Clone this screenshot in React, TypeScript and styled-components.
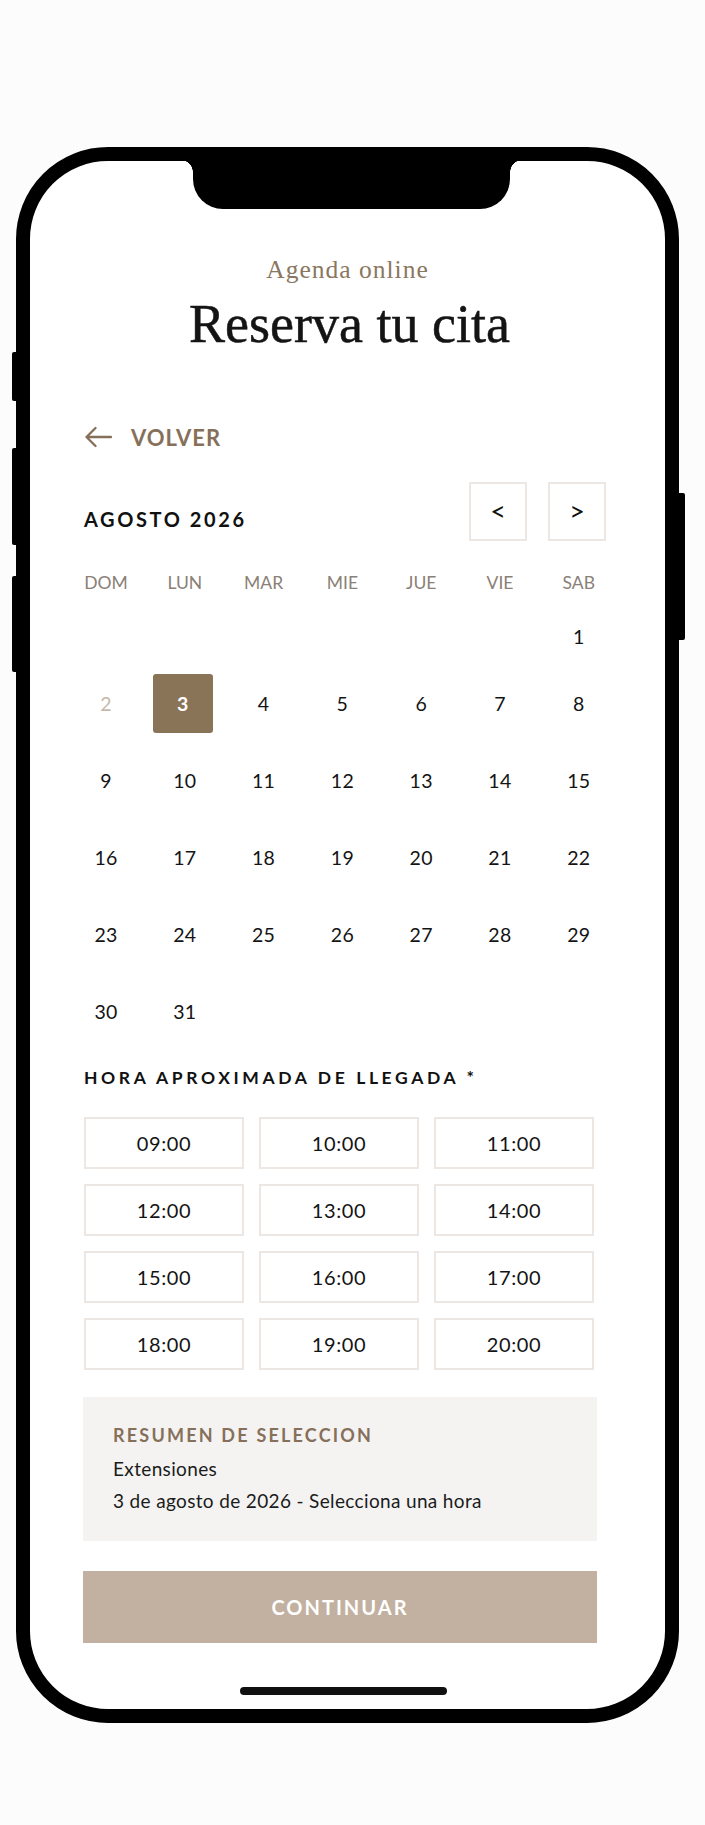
import { FC } from "react";
import styled, { createGlobalStyle, css } from "styled-components";

const GlobalStyle = createGlobalStyle`
  * {
    box-sizing: border-box;
  }
  body {
    margin: 0;
    background: #fcfcfc;
    font-family: "Lato", "Liberation Sans", sans-serif;
    color: #141414;
  }
  button {
    font-family: inherit;
    cursor: pointer;
  }
`;

const weekDays = ["DOM", "LUN", "MAR", "MIE", "JUE", "VIE", "SAB"];
const hours = [
  "09:00", "10:00", "11:00",
  "12:00", "13:00", "14:00",
  "15:00", "16:00", "17:00",
  "18:00", "19:00", "20:00",
];

// agosto 2026 empieza en sabado
const FIRST_WEEKDAY = 6;
const DAYS_IN_MONTH = 31;
const SELECTED_DAY = 3;
const TODAY = 3;

const sideButtons = [
  { side: "left", top: 191, height: 49 },
  { side: "left", top: 287, height: 97 },
  { side: "left", top: 415, height: 96 },
  { side: "right", top: 332, height: 147 },
] as const;

const ArrowLeft: FC = () => (
  <svg width="28" height="22" viewBox="0 0 28 22" fill="none">
    <path
      d="M27 11H2.5M11.5 2L2.5 11l9 9"
      stroke="currentColor"
      strokeWidth="2.3"
      strokeLinecap="round"
      strokeLinejoin="round"
    />
  </svg>
);

const App: FC = () => {
  const cells: (number | null)[] = [
    ...Array(FIRST_WEEKDAY).fill(null),
    ...Array.from({ length: DAYS_IN_MONTH }, (_, i) => i + 1),
  ];

  return (
    <Page>
      <GlobalStyle />
      <Phone>
        {sideButtons.map(({ side, top, height }) => (
          <SideButton key={top} $side={side} $top={top} $height={height} />
        ))}
        <Notch />
        <Screen>
          <Intro>
            <Eyebrow>Agenda online</Eyebrow>
            <Title>Reserva tu cita</Title>
          </Intro>

          <Body>
            <BackLink type="button">
              <ArrowLeft />
              VOLVER
            </BackLink>

            <MonthBar>
              <MonthTitle>AGOSTO 2026</MonthTitle>
              <NavGroup>
                <NavButton type="button">&lt;</NavButton>
                <NavButton type="button">&gt;</NavButton>
              </NavGroup>
            </MonthBar>

            <WeekRow>
              {weekDays.map((d) => (
                <span key={d}>{d}</span>
              ))}
            </WeekRow>

            <DaysGrid>
              {cells.map((day, i) =>
                day === null ? (
                  <span key={`e${i}`} />
                ) : (
                  <DayCell
                    key={day}
                    $selected={day === SELECTED_DAY}
                    $past={day < TODAY && day !== 1}
                  >
                    {day}
                  </DayCell>
                )
              )}
            </DaysGrid>

            <SectionLabel>HORA APROXIMADA DE LLEGADA *</SectionLabel>
            <SlotGrid>
              {hours.map((h) => (
                <Slot key={h} type="button">
                  {h}
                </Slot>
              ))}
            </SlotGrid>

            <Summary>
              <SummaryTitle>RESUMEN DE SELECCION</SummaryTitle>
              <SummaryLine>Extensiones</SummaryLine>
              <SummaryLine $gap={10}>
                3 de agosto de 2026 - Selecciona una hora
              </SummaryLine>
            </Summary>

            <ContinueButton type="button">CONTINUAR</ContinueButton>
          </Body>
        </Screen>
        <HomeIndicator />
      </Phone>
    </Page>
  );
};

const Page = styled.div`
  min-height: 1825px;
  padding: 147px 0 0 16px;
`;

const Phone = styled.div`
  position: relative;
  width: 663px;
  height: 1576px;
  border: 14px solid #000;
  border-radius: 92px;
  background: #fff;
`;

const SideButton = styled.span<{
  $side: "left" | "right";
  $top: number;
  $height: number;
}>`
  position: absolute;
  top: ${(p) => p.$top}px;
  height: ${(p) => p.$height}px;
  background: #000;
  ${(p) =>
    p.$side === "left"
      ? css`
          left: -18px;
          width: 6px;
          border-radius: 2px 0 0 2px;
        `
      : css`
          right: -20px;
          width: 8px;
          border-radius: 0 2px 2px 0;
        `}
`;

const Notch = styled.div`
  position: absolute;
  top: -1px;
  left: 163px;
  width: 317px;
  height: 49px;
  background: #000;
  border-radius: 0 0 30px 30px;
  z-index: 2;

  &::before,
  &::after {
    content: "";
    position: absolute;
    top: 0;
    width: 12px;
    height: 12px;
  }
  &::before {
    left: -12px;
    background: radial-gradient(circle at 0 100%, transparent 11.5px, #000 12px);
  }
  &::after {
    right: -12px;
    background: radial-gradient(circle at 100% 100%, transparent 11.5px, #000 12px);
  }
`;

const HomeIndicator = styled.div`
  position: absolute;
  left: 210px;
  bottom: 14px;
  width: 207px;
  height: 8px;
  border-radius: 4px;
  background: #111;
`;

const Screen = styled.div`
  height: 100%;
  padding-top: 94px;
  border-radius: 78px;
  overflow: hidden;
`;

const Intro = styled.header`
  display: flex;
  flex-direction: column;
  align-items: center;
  font-family: "Liberation Serif", "Times New Roman", serif;
`;

const Eyebrow = styled.p`
  margin: 0;
  font-size: 25.5px;
  line-height: 30px;
  letter-spacing: 1px;
  color: #8a7761;
`;

const Title = styled.h1`
  margin: 7px 0 0 4px;
  font-size: 54px;
  line-height: 64px;
  font-weight: 400;
  color: #141414;
  -webkit-text-stroke: 0.5px #141414;
`;

const Body = styled.main`
  padding: 0 68px 0 53px;
`;

const BackLink = styled.button`
  display: flex;
  align-items: center;
  gap: 19px;
  height: 30px;
  margin-top: 66px;
  padding: 0 0 0 1px;
  border: 0;
  background: none;
  color: #86705a;
  font-size: 22px;
  font-weight: 700;
  letter-spacing: 1px;
`;

const MonthBar = styled.div`
  display: flex;
  align-items: center;
  justify-content: space-between;
  margin: 30px -9px 0 0;
`;

const MonthTitle = styled.h2`
  margin: 14px 0 0 1px;
  font-size: 20px;
  line-height: 24px;
  font-weight: 700;
  letter-spacing: 2.6px;
  color: #111;
`;

const NavGroup = styled.div`
  display: flex;
  gap: 21px;
`;

const NavButton = styled.button`
  display: flex;
  align-items: center;
  justify-content: center;
  width: 58px;
  height: 59px;
  padding: 0 0 2px;
  border: 2px solid #ece7e2;
  background: #fff;
  color: #111;
  font-size: 27px;
`;

const calendarColumns = css`
  display: grid;
  grid-template-columns: repeat(7, 60px);
  column-gap: 18.8px;
  margin-left: -7px;
`;

const WeekRow = styled.div`
  ${calendarColumns}
  margin-top: 32px;
  font-size: 17.5px;
  line-height: 20px;
  color: #8b8077;
  text-align: center;
`;

const DaysGrid = styled.div`
  ${calendarColumns}
  grid-template-rows: 39px repeat(5, 59px);
  row-gap: 18px;
  margin-top: 24px;
`;

const DayCell = styled.span<{ $selected?: boolean; $past?: boolean }>`
  display: flex;
  align-items: center;
  justify-content: center;
  font-size: 19.5px;
  letter-spacing: 0.3px;
  color: ${(p) => (p.$past ? "#c6b8a9" : "#141414")};
  ${(p) =>
    p.$selected &&
    css`
      margin-left: -2px;
      margin-right: 2px;
      background: #8a7458;
      color: #fff;
      font-weight: 700;
      border-radius: 3px;
    `}
`;

const SectionLabel = styled.h3`
  margin: 26px 0 0 1px;
  font-size: 17.5px;
  line-height: 22px;
  font-weight: 700;
  letter-spacing: 3.6px;
  color: #111;
`;

const SlotGrid = styled.div`
  display: grid;
  grid-template-columns: repeat(3, 1fr);
  grid-auto-rows: 52px;
  gap: 15px;
  margin: 28px 3px 0 1px;
`;

const Slot = styled.button`
  border: 2px solid #ece7e2;
  background: #fff;
  color: #141414;
  font-size: 20px;
  letter-spacing: 0.6px;
`;

const Summary = styled.section`
  margin-top: 27px;
  padding: 27px 30px 29px;
  background: #f4f3f2;
`;

const SummaryTitle = styled.h4`
  margin: 0;
  font-size: 18px;
  line-height: 22px;
  font-weight: 700;
  letter-spacing: 2.2px;
  color: #86705a;
`;

const SummaryLine = styled.p<{ $gap?: number }>`
  margin: ${(p) => p.$gap ?? 12}px 0 0;
  font-size: 19px;
  line-height: 22px;
  letter-spacing: 0.35px;
  color: #1b1b1b;
`;

const ContinueButton = styled.button`
  display: block;
  width: 100%;
  height: 72px;
  margin-top: 30px;
  border: 0;
  background: #c2b1a0;
  color: #fff;
  font-size: 20px;
  font-weight: 700;
  letter-spacing: 2px;
`;

export default App;
